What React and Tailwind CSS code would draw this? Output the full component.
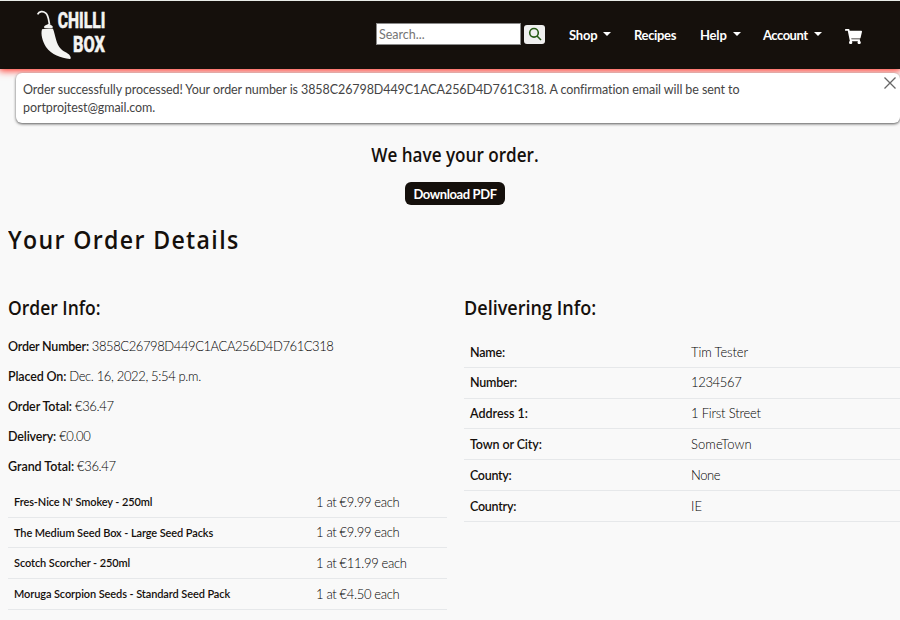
import { FaShoppingCart } from "react-icons/fa";

const details = [
  ["Order Number:", "3858C26798D449C1ACA256D4D761C318", "tracking-[-0.23px]", "tracking-[-0.42px]"],
  ["Placed On:", "Dec. 16, 2022, 5:54 p.m.", "tracking-[-0.15px]", "tracking-[-0.36px]"],
  ["Order Total:", "€36.47", "tracking-[-0.1px]", "tracking-[-0.35px]"],
  ["Delivery:", "€0.00", "tracking-[-0.15px]", "tracking-[-0.4px]"],
  ["Grand Total:", "€36.47", "tracking-[-0.05px]", "tracking-[-0.35px]"],
];

const items = [
  ["Fres-Nice N' Smokey - 250ml", "1 at €9.99 each"],
  ["The Medium Seed Box - Large Seed Packs", "1 at €9.99 each"],
  ["Scotch Scorcher - 250ml", "1 at €11.99 each"],
  ["Moruga Scorpion Seeds - Standard Seed Pack", "1 at €4.50 each"],
];

const address = [
  ["Name:", "Tim Tester", "tracking-[-0.2px]", "tracking-[-0.1px]"],
  ["Number:", "1234567", "tracking-[-0.2px]", "tracking-[-0.35px]"],
  ["Address 1:", "1 First Street", "tracking-normal", "tracking-[-0.2px]"],
  ["Town or City:", "SomeTown", "tracking-[-0.12px]", "tracking-[0.1px]"],
  ["County:", "None", "tracking-[-0.3px]", "tracking-[-0.4px]"],
  ["Country:", "IE", "tracking-[-0.25px]", "tracking-normal"],
];

function Logo() {
  return (
    <svg className="ml-9 h-[64px] w-[84px] shrink-0 overflow-visible" viewBox="36 2.5 84 64" fill="#f4f4f2">
      <path d="M37.6 13.8C39 10.800 43 10.200 45.800 12.600C48.700 15.200 48.500 20 49.600 24.200" fill="none" stroke="#f4f4f2" strokeWidth="1.700" />
      <path d="M43.800 26.500C45 24.300 47 24.600 48.600 23.200C50 24.300 52 24.200 53 26.600L52.200 27.500H44.500Z" />
      <path d="M42 28.800C45.500 28 50 28 53 28.300C55.500 35 56 43.500 61 48.500C64.500 52 69.500 52.500 70.600 56.500C70.900 58 70.600 58.600 69.800 58.400C61 57.500 51.500 54.500 46 46.500C42.500 41 40.500 33.500 42 28.800Z" />
      <g fontFamily="Roboto, sans-serif" fontWeight="800" fontSize="22.500" stroke="#f4f4f2" strokeWidth="0.500">
        <text x="57.800" y="27.300" textLength="47.500" lengthAdjust="spacingAndGlyphs">CHILLI</text>
        <text x="73" y="51.700" textLength="32" lengthAdjust="spacingAndGlyphs">BOX</text>
      </g>
    </svg>
  );
}

function NavItem({ label, caret, className }) {
  return (
    <span className={`flex items-center whitespace-nowrap pt-px text-[13px] font-bold text-white ${className}`}>
      {label}
      {caret && <i className="mb-1 ml-1.5 border-x-4 border-t-4 border-x-transparent border-t-white" />}
    </span>
  );
}

const heading = "w-fit whitespace-nowrap font-['Open_Sans'] text-[19px] font-semibold leading-6";

export default function App() {
  return (
    <div className="h-[620px] w-[900px] overflow-hidden bg-[#f9f9f9] font-['Lato',sans-serif] text-[12.5px] text-[#15100c]">
      <header className="relative flex h-[69px] items-center border-t border-[#e8ece8] bg-[#15100c] shadow-[0_1px_7px_1px_#ff3b30]">
        <Logo />
        <div className="ml-64 -mt-0.5 flex h-[22px] w-[145px] items-center border border-[#8a8a8a] bg-white pl-0.5 pt-0.5 text-[#757575]">Search...</div>
        <button className="ml-[3px] -mt-0.5 flex h-[19px] w-[21px] items-center justify-center rounded-[3px] bg-[#efefef] text-[#255a14]">
          <svg viewBox="0 0 14 14" className="size-[14px]" fill="none" stroke="currentColor" strokeWidth="1.600">
            <circle cx="6" cy="5.800" r="4.300" />
            <path d="M9 9L13 13" />
          </svg>
        </button>
        <NavItem label="Shop" caret className="ml-6 w-[65px] tracking-[-0.2px]" />
        <NavItem label="Recipes" className="w-[66px] tracking-[-0.35px]" />
        <NavItem label="Help" caret className="w-[63px] tracking-[-0.2px]" />
        <NavItem label="Account" caret className="w-[82px] tracking-[-0.5px]" />
        <FaShoppingCart className="mt-[3px] size-[17px] text-white" />
      </header>

      <div className="relative ml-4 mt-1 flex h-[50px] justify-between rounded-md bg-white pl-[7px] shadow-[0_1px_3px_#555]">
        <p className="mt-2 whitespace-nowrap leading-[18px] tracking-[-0.08px] text-[#444]">
          Order successfully processed! Your order number is 3858C26798D449C1ACA256D4D761C318. A confirmation email will be sent to
          <br />
          portprojtest@gmail.com.
        </p>
        <svg viewBox="0 0 12 12" className="mr-1 mt-1 size-3" stroke="#666" strokeWidth="1.300">
          <path d="M0.500 0.500L11.500 11.500M11.500 0.500L0.500 11.500" />
        </svg>
      </div>

      <div className="flex flex-col items-center pl-2.5 pt-5">
        <h2 className={`scale-x-90 ${heading}`}>We have your order.</h2>
        <button className="mt-[15px] h-[23px] w-[100px] rounded-md bg-[#15100c] pt-0.5 text-[13px] font-bold tracking-[-0.4px] text-white">Download PDF</button>
      </div>

      <h1 className="ml-2 mt-[18px] w-fit origin-left scale-x-89 whitespace-nowrap font-['Open_Sans'] text-[26px] font-semibold leading-8 tracking-[1.500px]">Your Order Details</h1>

      <main className="mt-[41px] flex">
        <section className="ml-2 w-[439px]">
          <h2 className={`origin-left scale-x-92 ${heading}`}>Order Info:</h2>
          <div className="mt-[11.5px]">
            {details.map(([label, value, a, b]) => (
              <p key={label} className="flex h-[30px] items-center gap-[3px]">
                <b className={`pt-px font-semibold ${a}`}>{label}</b>
                <span className={`text-[13px] font-light text-black ${b}`}>{value}</span>
              </p>
            ))}
          </div>
          <div className="mt-[5.5px]">
            {items.map(([name, price]) => (
              <div key={name} className="flex h-[30.700px] items-center border-b border-[#e6e8ea] pl-1.5 pt-px">
                <b className="w-[302px] text-[11px] font-semibold tracking-[-0.1px]">{name}</b>
                <span className="text-[13px] font-light tracking-[-0.33px] text-black">{price}</span>
              </div>
            ))}
          </div>
        </section>
        <section className="ml-[17px] w-[436px]">
          <h2 className={`origin-left scale-x-95 ${heading}`}>Delivering Info:</h2>
          <div className="mt-[17px]">
            {address.map(([label, value, a, b]) => (
              <div key={label} className="flex h-[30.800px] items-center border-b border-[#e6e8ea] pl-1.5 pt-px">
                <b className={`w-[221px] pt-px font-semibold ${a}`}>{label}</b>
                <span className={`text-[13px] font-light text-black ${b}`}>{value}</span>
              </div>
            ))}
          </div>
        </section>
      </main>
    </div>
  );
}
